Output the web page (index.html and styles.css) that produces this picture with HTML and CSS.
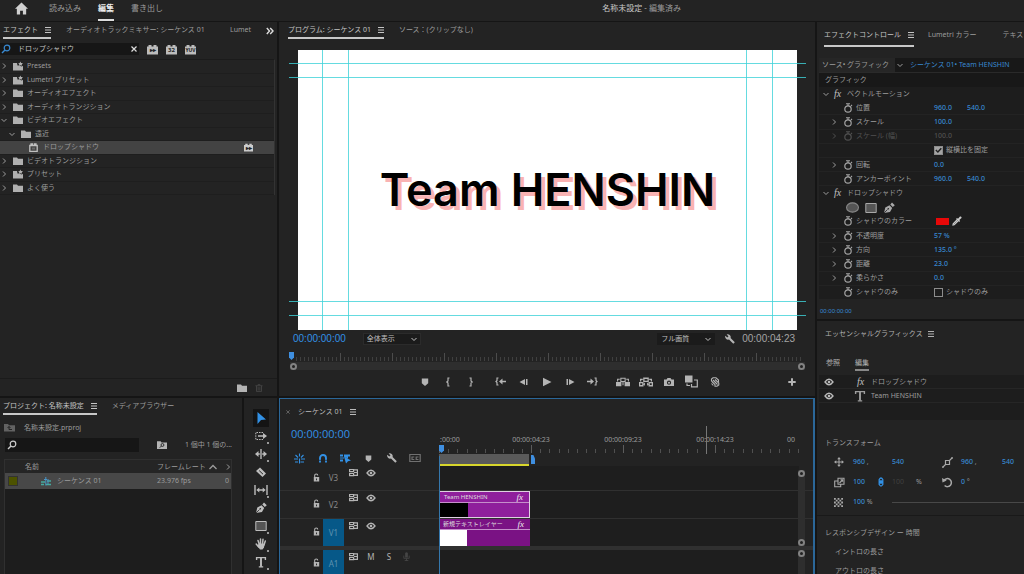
FILE: index.html
```html
<!DOCTYPE html>
<html lang="ja">
<head>
<meta charset="utf-8">
<meta name="viewport" content="width=device-width, initial-scale=1">
<title>名称未設定 - 編集済み</title>
<link rel="stylesheet" href="styles.css">
</head>
<body>
<svg class="defs" aria-hidden="true">
  <symbol id="home" viewBox="0 0 12 12"><path fill="currentColor" d="M6 .5 12 6.3h-1.700V11.500H7.300V8H4.700v3.500H1.700V6.300H0z"/></symbol>
  <symbol id="menu" viewBox="0 0 6 6"><path stroke="currentColor" d="M0 .5h6M0 3h6M0 5.500h6"/></symbol>
  <symbol id="right" viewBox="0 0 6 6"><path fill="none" stroke="currentColor" d="M2 .5 4.500 3 2 5.500"/></symbol>
  <symbol id="down" viewBox="0 0 6 6"><path fill="none" stroke="currentColor" d="M.5 2 3 4.500 5.500 2"/></symbol>
  <symbol id="up" viewBox="0 0 8 6"><path fill="none" stroke="currentColor" stroke-width="1.300" d="M.5 5 4 1.500 7.500 5"/></symbol>
  <symbol id="more" viewBox="0 0 8 8"><path fill="none" stroke="currentColor" stroke-width="1.400" d="M.8 1 3.500 4 .8 7M4.200 1 7 4 4.200 7"/></symbol>
  <symbol id="search" viewBox="0 0 10 10"><circle cx="6" cy="4" r="2.800" fill="none" stroke="currentColor" stroke-width="1.200"/><path stroke="currentColor" stroke-width="1.500" d="M4 6 1 9"/></symbol>
  <symbol id="close" viewBox="0 0 6 6"><path stroke="currentColor" stroke-width="1.200" d="m.5.5 5 5m0-5-5 5"/></symbol>
  <symbol id="folder" viewBox="0 0 10 8"><path fill="currentColor" d="M0 .5h4l1 1.200h5V8H0z"/></symbol>
  <symbol id="starfolder" viewBox="0 0 10 9"><path fill="currentColor" d="M0 1.500h4L4.500 4h3L8 5l2-.5V9H0z"/><path fill="currentColor" d="m7.300 0 .8 1.400 1.900.1-1.200 1.200.4 1.500-1.700-.8-1.600.8.3-1.600L5 1.500l1.700-.1z"/></symbol>
  <symbol id="block" viewBox="0 0 11 10"><path fill="currentColor" d="M0 2h1.500V.5h3V2h2V.5h3V2H11v8H0z"/></symbol>
  <symbol id="fxblock" viewBox="0 0 9 9"><path fill="none" stroke="currentColor" stroke-width="1.300" d="M.8 2.500h7.400v5.800H.8zM2 2.500V1h1.500v1.500m2 0V1H7v1.500"/><path fill="currentColor" d="M3 4.500h3v2H3z" opacity=".3"/></symbol>
  <symbol id="trash" viewBox="0 0 8 9"><path fill="none" stroke="currentColor" d="M0 2h8M3 2V.5h2V2M1.200 2v6.500h5.600V2M3 3.500v4m2-4v4"/></symbol>
  <symbol id="binup" viewBox="0 0 11 8"><path fill="currentColor" d="M0 .5h4l1 1.200h6V8H0z"/><path fill="none" stroke="#232323" d="M8 6H5V3M3.500 4.500 5 3l1.500 1.500"/></symbol>
  <symbol id="binfind" viewBox="0 0 11 9"><path fill="currentColor" d="M0 .5h4l1 1.200h6V9H0z"/><circle cx="6" cy="4.500" r="1.600" fill="none" stroke="#232323"/><path stroke="#232323" d="m5 5.500-2 2"/></symbol>
  <symbol id="seq" viewBox="0 0 10 10"><path stroke="#45aaa0" stroke-width="1.300" d="M0 6h4M6 5h4M0 8.500h3m2 0h5"/><path stroke="#4a96c8" d="M3 3.500h3M4.800 1v8.500M7 3v5"/></symbol>
  <symbol id="arrow" viewBox="0 0 12 12"><path fill="#3291e6" d="m2.500 0 8.500 7.500-5 .5L2.500 12z"/></symbol>
  <symbol id="trackselect" viewBox="0 0 12 12"><path fill="none" stroke="currentColor" stroke-dasharray="1.500 1" d="M8 2.500H.8v7H8"/><path fill="currentColor" d="M3 5.300h5V3l4 3-4 3V6.700H3z"/></symbol>
  <symbol id="ripple" viewBox="0 0 12 12"><path fill="currentColor" d="M5.300 1h1.400v10H5.300zM0 6l3.500-3v2.300h1.300v1.400H3.500V9zM12 6 8.500 3v2.300H7.200v1.400h1.300V9z"/></symbol>
  <symbol id="razor" viewBox="0 0 12 12"><path fill="currentColor" d="m1 5 4-3.500L11 7.500 7.500 11z"/><path stroke="#232323" d="m4.200 4.600 3.800 3.600"/></symbol>
  <symbol id="slip" viewBox="0 0 14 12"><path stroke="currentColor" stroke-width="1.400" d="M1 1v10M13 1v10M4 6h6"/><path fill="currentColor" d="m2.300 6 3-2.500v5zM11.700 6l-3-2.500v5z"/></symbol>
  <symbol id="pen" viewBox="0 0 12 12"><path fill="currentColor" d="M1 11 2.300 5.500 6.500 3.300l2.700 2.600L7 10zM7.300 2.500 9 .5l2.800 2.800-2 1.600z"/><path stroke="#232323" stroke-width=".8" d="m1 11 3.500-3.500"/><circle cx="5.300" cy="6.700" r=".8" fill="#232323"/></symbol>
  <symbol id="rect" viewBox="0 0 12 12"><path fill="#555" stroke="currentColor" d="M.8 1.500h10.400v9H.8z"/></symbol>
  <symbol id="oval" viewBox="0 0 12 12"><ellipse cx="6" cy="6" rx="5.500" ry="4.300" fill="#555" stroke="#888"/></symbol>
  <symbol id="hand" viewBox="0 0 12 12"><path fill="none" stroke="currentColor" stroke-width="1.500" stroke-linecap="round" d="M3 2.500 4.200 6M5.500 1v5M8 1.300 7.500 6M10.300 3 9 7M1.200 6l2.500 3"/><path fill="currentColor" d="m3.500 5.500 6.200.3L9 9.500 7.500 11.500H5L2.700 8.500z"/></symbol>
  <symbol id="type" viewBox="0 0 12 12"><path fill="none" stroke="currentColor" stroke-width="1.900" d="M6 1.500V10.800"/><path fill="none" stroke="currentColor" stroke-width="1.400" d="M1.600 4V1.600h8.800V4M3.800 10.900h4.400"/></symbol>
  <symbol id="marker" viewBox="0 0 8 8"><path fill="currentColor" d="M.8.5h6.400v4.700L4 8 .8 5.200z"/></symbol>
  <symbol id="brl" viewBox="0 0 6 10"><path fill="none" stroke="currentColor" stroke-width="1.200" d="M4.500 1H3v3L1.800 5 3 6v3h1.500"/></symbol>
  <symbol id="brr" viewBox="0 0 6 10"><path fill="none" stroke="currentColor" stroke-width="1.200" d="M1.500 1H3v3l1.200 1L3 6v3H1.500"/></symbol>
  <symbol id="goin" viewBox="0 0 11 10"><path fill="none" stroke="currentColor" stroke-width="1.200" d="M3.500 1.500H2V4L1 5l1 1v2.500h1.500"/><path fill="currentColor" d="m4 5 3.500-3v2.200H11v1.600H7.500V8z"/></symbol>
  <symbol id="goout" viewBox="0 0 11 10"><path fill="none" stroke="currentColor" stroke-width="1.200" d="M7.500 1.500H9V4l1 1-1 1v2.500H7.500"/><path fill="currentColor" d="M7 5 3.500 2v2.200H0v1.600h3.500V8z"/></symbol>
  <symbol id="back" viewBox="0 0 10 10"><path fill="currentColor" d="m.5 5 5.500-3v6zM7 2h1.500v6H7z"/></symbol>
  <symbol id="fwd" viewBox="0 0 10 10"><path fill="currentColor" d="M9.500 5 4 2v6zM1.500 2H3v6H1.500z"/></symbol>
  <symbol id="play" viewBox="0 0 10 10"><path fill="currentColor" d="m1 .8 8.500 4.200L1 9.200z"/></symbol>
  <symbol id="lift" viewBox="0 0 13 10"><path fill="currentColor" d="M0 5h5v4H0zM8 5h5v4H8z"/><path fill="none" stroke="currentColor" d="M4.500 1.500h4v3h-4zM1.500 4.500v-2h2M11.500 4.500v-2h-2M6.500 5v3"/></symbol>
  <symbol id="extract" viewBox="0 0 13 10"><path fill="none" stroke="currentColor" stroke-width="1.200" d="M.6 5.500h3v3h-3zM9.400 5.500h3v3h-3zM4.500 1.500h4v3h-4zM1.500 4.500v-2h2M11.500 4.500v-2h-2"/><path fill="currentColor" d="m3.500 7 2-1.500v3zM9.500 7l-2-1.500v3z"/></symbol>
  <symbol id="camera" viewBox="0 0 10 10"><path fill="currentColor" fill-rule="evenodd" d="M0 2.500h2.500l1-1.500h3l1 1.500H10V9H0zM5 3.600a2.100 2.100 0 1 0 0 4.200 2.100 2.100 0 0 0 0-4.200z"/><circle cx="5" cy="5.700" r="1" fill="currentColor"/></symbol>
  <symbol id="compare" viewBox="0 0 13 12"><path fill="currentColor" d="M0 0h7.500v7H0z"/><path fill="none" stroke="currentColor" stroke-width="1.200" d="M9 4.500h3.300v6.800H6.500V8.500M2 8v2h3"/></symbol>
  <symbol id="proxy" viewBox="0 0 10 10"><path fill="none" stroke="currentColor" stroke-width="1.100" d="M1.500 4V2L3 .8h3L8.500 3v2M3 3l4.500 4.500M1.500 4 5 7.500v1.700h2L8.800 8V6L5 2.500M1.500 6.500l1.800 2"/></symbol>
  <symbol id="plus" viewBox="0 0 8 8"><path stroke="currentColor" stroke-width="2" d="M4 .3v7.400M.3 4h7.400"/></symbol>
  <symbol id="wrench" viewBox="0 0 10 10"><path fill="currentColor" d="M1.600.4A3 3 0 0 1 5.600 4L9.800 8.200 8.300 9.800 4 5.500A3 3 0 0 1 .3 1.700L2.300 3.500 3.500 2.300z"/></symbol>
  <symbol id="nest" viewBox="0 0 11 10"><path fill="none" stroke="currentColor" stroke-width="1.100" d="M0 5.500h4M7 5.500h4M1 8.500h3m2.500 0H10M5.500 0v3M1.500 1.500l2.500 2.500M9.500 1.500 7 4M5.500 5v5"/></symbol>
  <symbol id="magnet" viewBox="0 0 10 10"><path fill="none" stroke="currentColor" stroke-width="1.900" d="M2 9.500V5a3 3 0 0 1 6 0v4.500"/><path stroke="#232323" stroke-width=".7" d="M.5 7.300h9"/></symbol>
  <symbol id="linked" viewBox="0 0 11 10"><path fill="currentColor" d="M0 1h3v2H0zM4 1h6v2H8v2L4 3zM0 6h3v2H0zM4 3l7 4-3 .8L6 10z"/><path fill="currentColor" d="M0 4h4v1H0z"/></symbol>
  <symbol id="cc" viewBox="0 0 12 10"><path fill="none" stroke="currentColor" stroke-width="1.200" d="M.8 1.500h10.400v7H.8zM5.300 4H3v2.500h2.300M9.500 4H7.200v2.500h2.300"/></symbol>
  <symbol id="lock" viewBox="0 0 8 10"><path fill="currentColor" fill-rule="evenodd" d="M1 4.500h6v5H1zM3.500 6v2h1V6z"/><path fill="none" stroke="currentColor" stroke-width="1.200" d="M2 4.500V2.800a1.700 1.700 0 0 1 3.400 0"/></symbol>
  <symbol id="sync" viewBox="0 0 9 8"><path fill="none" stroke="currentColor" stroke-width="1.200" d="M.6 1h4v2.200h-4zM.6 5h4v2.200h-4zM5 1.300h3.400v5.600H5M5 4h3.400"/></symbol>
  <symbol id="eye" viewBox="0 0 10 8"><path fill="none" stroke="currentColor" stroke-width="1.300" d="M1 4q4-5.500 8 0-4 5.500-8 0z"/><circle cx="5" cy="4" r="1.300" fill="currentColor"/></symbol>
  <symbol id="mic" viewBox="0 0 8 10"><path fill="currentColor" d="M2.500 1q1.500-1.500 3 0v5h-3z"/><path fill="none" stroke="currentColor" d="M1 4v3h6V4M4 7v3M2 9.500h4"/></symbol>
  <symbol id="watch" viewBox="0 0 10 10"><circle cx="5" cy="6" r="3.200" fill="none" stroke="currentColor" stroke-width="1.200"/><path stroke="currentColor" stroke-width="1.100" d="M3 .7h4M5 .7V3M8 2l1 1"/></symbol>
  <symbol id="dropper" viewBox="0 0 10 10"><path fill="currentColor" d="m5 2 1 .8L8 .5q2-.5 1.500 1.500L7.300 4l.8 1-1 1L4 3z"/><path fill="none" stroke="currentColor" stroke-width="1.200" d="M5 4 1.200 7.800 1 9l1.200-.2L6 5"/></symbol>
  <symbol id="move" viewBox="0 0 10 10"><path stroke="currentColor" d="M5 1v8M1 5h8"/><path fill="currentColor" d="m5 0 1.800 2.300H3.200zM5 10 3.200 7.700h3.600zM0 5l2.300-1.800v3.600zM10 5 7.700 3.200v3.600z"/></symbol>
  <symbol id="anchor" viewBox="0 0 11 11"><path fill="none" stroke="currentColor" stroke-width="1.200" d="M3.500 3.500h4v4h-4zM.5 10.500l3-3M7.500 3.500l3-3"/><path fill="currentColor" d="M.3 9v1.700H2zM9 .3h1.700V2z"/></symbol>
  <symbol id="scale" viewBox="0 0 11 10"><path fill="none" stroke="currentColor" stroke-width="1.100" d="M4 .8h6v6H4zM4 3.500H.7v5.700h6V7M5.500 5.500l3-3M6.500 2.300h2v2"/></symbol>
  <symbol id="rotate" viewBox="0 0 11 10"><path fill="none" stroke="currentColor" stroke-width="1.500" d="M2 3a4 4 0 1 1 .6 5"/><path fill="currentColor" d="M0 .5 4.700 3 .5 5z"/></symbol>
  <symbol id="checker" viewBox="0 0 9 9"><path stroke="currentColor" stroke-width="1.800" stroke-dasharray="1.800" d="M0 .9h9M0 4.500h9M0 8.100h9"/><path stroke="currentColor" stroke-width="1.800" stroke-dasharray="1.800" stroke-dashoffset="1.800" d="M0 2.700h9M0 6.300h9"/></symbol>
  <symbol id="chain" viewBox="0 0 6 10"><path fill="none" stroke="currentColor" stroke-width="1.300" d="M1.200 4.500v-2Q3-.5 4.800 2.500v2zM1.200 5.500v2q1.800 3 3.600 0v-2zM3 3v4"/></symbol>
</svg>

<header class="topbar">
  <button class="icon-btn" aria-label="ホーム"><svg class="i13"><use href="#home"/></svg></button>
  <nav class="modes">
    <button>読み込み</button><button class="on">編集</button><button>書き出し</button>
  </nav>
  <h1 class="doc"><span>名称未設定</span> - 編集済み</h1>
</header>

<main class="workspace">
  <div class="left">
    <section class="panel effects">
      <div class="tabs">
        <button class="tab on">エフェクト<svg class="i6"><use href="#menu"/></svg></button>
        <button class="tab tab-gap">オーディオトラックミキサー: シーケンス 01</button>
        <button class="tab lumet">Lumet</button>
        <button class="icon-btn bright" aria-label="その他のタブ"><svg class="i8"><use href="#more"/></svg></button>
      </div>
      <div class="fx-search">
        <label class="field blue-icon"><svg class="i10"><use href="#search"/></svg><input type="text" value="ドロップシャドウ" aria-label="エフェクトを検索"><button class="icon-btn bright" aria-label="クリア"><svg class="i6"><use href="#close"/></svg></button></label>
        <button class="badge" aria-label="高速処理"><svg class="i11"><use href="#block"/></svg><span>▸▸</span></button>
        <button class="badge" aria-label="32"><svg class="i11"><use href="#block"/></svg><span>32</span></button>
        <button class="badge" aria-label="YUV"><svg class="i11"><use href="#block"/></svg><span class="tiny">YUV</span></button>
      </div>
      <ul class="tree">
        <li><svg class="i6"><use href="#right"/></svg><svg class="i10"><use href="#starfolder"/></svg>Presets</li>
        <li><svg class="i6"><use href="#right"/></svg><svg class="i10"><use href="#starfolder"/></svg>Lumetri プリセット</li>
        <li><svg class="i6"><use href="#right"/></svg><svg class="i10"><use href="#folder"/></svg>オーディオエフェクト</li>
        <li><svg class="i6"><use href="#right"/></svg><svg class="i10"><use href="#folder"/></svg>オーディオトランジション</li>
        <li><svg class="i6"><use href="#down"/></svg><svg class="i10"><use href="#folder"/></svg>ビデオエフェクト</li>
        <li class="lv1"><svg class="i6"><use href="#down"/></svg><svg class="i10"><use href="#folder"/></svg>遠近</li>
        <li class="lv2 sel"><svg class="i9"><use href="#fxblock"/></svg>ドロップシャドウ<span class="badge small"><svg class="i9"><use href="#block"/></svg><span>▸▸</span></span></li>
        <li><svg class="i6"><use href="#right"/></svg><svg class="i10"><use href="#folder"/></svg>ビデオトランジション</li>
        <li><svg class="i6"><use href="#right"/></svg><svg class="i10"><use href="#starfolder"/></svg>プリセット</li>
        <li><svg class="i6"><use href="#right"/></svg><svg class="i10"><use href="#folder"/></svg>よく使う</li>
      </ul>
      <div class="fx-foot">
        <button class="icon-btn" aria-label="新規カスタムビン"><svg class="i10"><use href="#folder"/></svg></button>
        <button class="icon-btn dim" aria-label="削除"><svg class="i8"><use href="#trash"/></svg></button>
      </div>
    </section>

    <div class="lower">
      <section class="panel project">
        <div class="tabs">
          <button class="tab on">プロジェクト: 名称未設定<svg class="i6"><use href="#menu"/></svg></button>
          <button class="tab tab-gap">メディアブラウザー</button>
        </div>
        <div class="crumb"><svg class="i11 dim"><use href="#binup"/></svg>名称未設定.prproj</div>
        <div class="proj-search">
          <label class="field"><svg class="i10"><use href="#search"/></svg><input type="text" aria-label="プロジェクトを検索"></label>
          <button class="icon-btn" aria-label="検索ビン"><svg class="i10"><use href="#binfind"/></svg></button>
          <span>1 個中 1 個の...</span>
        </div>
        <div class="table-box">
          <table>
            <thead><tr><th class="c-label"></th><th>名前</th><th class="c-rate">フレームレート</th><th class="c-sort"><svg class="i8"><use href="#up"/></svg></th><th class="c-next"><svg class="i6"><use href="#right"/></svg></th></tr></thead>
            <tbody><tr><td><i class="swatch"></i></td><td class="seq-name"><svg class="i10"><use href="#seq"/></svg>シーケンス 01</td><td>23.976 fps</td><td></td><td>0</td></tr></tbody>
          </table>
        </div>
      </section>
      <section class="panel tools" aria-label="ツール">
        <button class="on" aria-label="選択"><svg class="i12"><use href="#arrow"/></svg></button>
        <button class="sub" aria-label="トラックの前方選択"><svg class="i12"><use href="#trackselect"/></svg></button>
        <button class="sub" aria-label="リップル"><svg class="i12"><use href="#ripple"/></svg></button>
        <button aria-label="レーザー"><svg class="i12"><use href="#razor"/></svg></button>
        <button class="sub" aria-label="スリップ"><svg class="i14"><use href="#slip"/></svg></button>
        <button aria-label="ペン"><svg class="i12"><use href="#pen"/></svg></button>
        <button class="sub" aria-label="長方形"><svg class="i12"><use href="#rect"/></svg></button>
        <button class="sub" aria-label="手のひら"><svg class="i12"><use href="#hand"/></svg></button>
        <button class="sub" aria-label="文字"><svg class="i12"><use href="#type"/></svg></button>
      </section>
    </div>
  </div>

  <div class="center">
    <section class="panel program">
      <div class="tabs">
        <button class="tab on">プログラム: シーケンス 01<svg class="i6"><use href="#menu"/></svg></button>
        <button class="tab tab-src">ソース：(クリップなし)</button>
      </div>
      <div class="monitor">
        <div class="frame">Team HENSHIN</div>
        <i class="guide h g1"></i><i class="guide h g2"></i><i class="guide h g3"></i><i class="guide h g4"></i>
        <i class="guide v g5"></i><i class="guide v g6"></i><i class="guide v g7"></i><i class="guide v g8"></i>
      </div>
      <div class="mon-ctl">
        <span class="tc blue">00:00:00:00</span>
        <span class="pick"><select aria-label="ズーム"><option>全体表示</option></select><svg class="i6"><use href="#down"/></svg></span>
        <span class="pick res"><select aria-label="解像度"><option>フル画質</option></select><svg class="i6"><use href="#down"/></svg></span>
        <button class="icon-btn" aria-label="設定"><svg class="i10"><use href="#wrench"/></svg></button>
        <span class="tc">00:00:04:23</span>
      </div>
      <div class="mon-ruler"><i class="head"></i></div>
      <div class="zoombar"><i></i><i></i></div>
      <div class="transport">
        <div><button aria-label="マーカー"><svg class="i8"><use href="#marker"/></svg></button><button aria-label="イン"><svg class="i10"><use href="#brl"/></svg></button><button aria-label="アウト"><svg class="i10"><use href="#brr"/></svg></button></div>
        <div><button aria-label="インへ移動"><svg class="i11"><use href="#goin"/></svg></button><button aria-label="1フレーム戻る"><svg class="i10"><use href="#back"/></svg></button><button aria-label="再生"><svg class="i10"><use href="#play"/></svg></button><button aria-label="1フレーム進む"><svg class="i10"><use href="#fwd"/></svg></button><button aria-label="アウトへ移動"><svg class="i11"><use href="#goout"/></svg></button></div>
        <div><button aria-label="リフト"><svg class="i14"><use href="#lift"/></svg></button><button aria-label="抽出"><svg class="i14"><use href="#extract"/></svg></button><button aria-label="フレームを書き出し"><svg class="i10"><use href="#camera"/></svg></button><button aria-label="比較表示"><svg class="i13"><use href="#compare"/></svg></button><button aria-label="プロキシ"><svg class="i10"><use href="#proxy"/></svg></button></div>
        <button class="add" aria-label="追加"><svg class="i8"><use href="#plus"/></svg></button>
      </div>
    </section>

    <section class="panel timeline">
      <div class="seq-tab"><button class="icon-btn dim2" aria-label="閉じる"><svg class="i4"><use href="#close"/></svg></button><button class="tab-name">シーケンス 01</button><svg class="i6"><use href="#menu"/></svg></div>
      <div class="tl-head">
        <div class="tl-left">
          <div class="tl-tc">00:00:00:00</div>
          <div class="tl-icons">
            <button class="blue" aria-label="ネスト"><svg class="i11"><use href="#nest"/></svg></button>
            <button class="blue" aria-label="スナップ"><svg class="i10"><use href="#magnet"/></svg></button>
            <button class="blue" aria-label="リンク"><svg class="i11"><use href="#linked"/></svg></button>
            <button aria-label="マーカー"><svg class="i7"><use href="#marker"/></svg></button>
            <button aria-label="設定"><svg class="i10"><use href="#wrench"/></svg></button>
            <button class="dim2" aria-label="キャプション"><svg class="i12"><use href="#cc"/></svg></button>
          </div>
        </div>
        <div class="tl-ruler">
          <div class="labels"><span>:00:00</span><span>00:00:04:23</span><span>00:00:09:23</span><span>00:00:14:23</span><span>00</span></div>
          <div class="ticks"></div>
          <div class="work"><i></i></div>
          <i class="hover"></i><i class="head"></i>
        </div>
      </div>
      <div class="tracks">
        <div class="track">
          <div class="th"><svg class="i9 lk"><use href="#lock"/></svg><span class="name">V3</span><svg class="i9"><use href="#sync"/></svg><svg class="i10"><use href="#eye"/></svg></div>
          <div class="lane"></div>
        </div>
        <div class="track">
          <div class="th"><svg class="i9 lk"><use href="#lock"/></svg><span class="name">V2</span><svg class="i9"><use href="#sync"/></svg><svg class="i10"><use href="#eye"/></svg></div>
          <div class="lane"><div class="clip picked"><div class="clip-name">Team HENSHIN<em>fx</em></div><div class="thumb black"></div></div></div>
        </div>
        <div class="track">
          <div class="th"><svg class="i9 lk"><use href="#lock"/></svg><span class="name target">V1</span><svg class="i9"><use href="#sync"/></svg><svg class="i10"><use href="#eye"/></svg></div>
          <div class="lane"><div class="clip"><div class="clip-name">新規テキストレイヤー<em>fx</em></div><div class="thumb"></div></div></div>
        </div>
        <div class="track audio">
          <div class="th"><svg class="i9 lk"><use href="#lock"/></svg><span class="name target">A1</span><svg class="i9"><use href="#sync"/></svg><button>M</button><button>S</button><svg class="i9 dim"><use href="#mic"/></svg></div>
          <div class="lane"></div>
        </div>
        <i class="needle"></i><div class="vbar"><i></i><i></i></div><div class="vbar low"><i></i></div>
      </div>
    </section>
  </div>

  <div class="right">
    <section class="panel controls">
      <div class="tabs">
        <button class="tab on">エフェクトコントロール<svg class="i6"><use href="#menu"/></svg></button>
        <button class="tab">Lumetri カラー</button>
        <button class="tab last">テキス</button>
      </div>
      <div class="src"><span class="master">ソース• グラフィック</span><svg class="i6"><use href="#down"/></svg><a href="#seq">シーケンス 01• Team HENSHIN</a></div>
      <div class="group">グラフィック</div>
      <div class="props">
        <div class="fxh"><svg class="i6"><use href="#down"/></svg><em>fx</em>ベクトルモーション</div>
        <div class="row"><i></i><svg class="i10"><use href="#watch"/></svg><span>位置</span><b>960.0</b><b>540.0</b></div>
        <div class="row"><svg class="i6"><use href="#right"/></svg><svg class="i10"><use href="#watch"/></svg><span>スケール</span><b>100.0</b></div>
        <div class="row off"><svg class="i6"><use href="#right"/></svg><svg class="i10"><use href="#watch"/></svg><span>スケール (幅)</span><b>100.0</b></div>
        <div class="row"><label class="chk"><input type="checkbox" checked>縦横比を固定</label></div>
        <div class="row"><svg class="i6"><use href="#right"/></svg><svg class="i10"><use href="#watch"/></svg><span>回転</span><b>0.0</b></div>
        <div class="row"><i></i><svg class="i10"><use href="#watch"/></svg><span>アンカーポイント</span><b>960.0</b><b>540.0</b></div>
        <div class="fxh"><svg class="i6"><use href="#down"/></svg><em>fx</em>ドロップシャドウ</div>
        <div class="shapes"><button aria-label="楕円形マスク"><svg class="i13"><use href="#oval"/></svg></button><button aria-label="長方形マスク"><svg class="i12"><use href="#rect"/></svg></button><button aria-label="ペンマスク"><svg class="i12"><use href="#pen"/></svg></button></div>
        <div class="row"><i></i><svg class="i10"><use href="#watch"/></svg><span>シャドウのカラー</span><button class="color" aria-label="カラー"></button><svg class="i10 drop"><use href="#dropper"/></svg></div>
        <div class="row"><svg class="i6"><use href="#right"/></svg><svg class="i10"><use href="#watch"/></svg><span>不透明度</span><b>57 %</b></div>
        <div class="row"><svg class="i6"><use href="#right"/></svg><svg class="i10"><use href="#watch"/></svg><span>方向</span><b>135.0 °</b></div>
        <div class="row"><svg class="i6"><use href="#right"/></svg><svg class="i10"><use href="#watch"/></svg><span>距離</span><b>23.0</b></div>
        <div class="row"><svg class="i6"><use href="#right"/></svg><svg class="i10"><use href="#watch"/></svg><span>柔らかさ</span><b>0.0</b></div>
        <div class="row"><i></i><svg class="i10"><use href="#watch"/></svg><span>シャドウのみ</span><label class="chk"><input type="checkbox">シャドウのみ</label></div>
      </div>
      <div class="ec-foot">00:00:00:00</div>
    </section>

    <section class="panel essential">
      <h2>エッセンシャルグラフィックス<svg class="i6"><use href="#menu"/></svg></h2>
      <div class="eg-tabs"><button>参照</button><button class="on">編集</button></div>
      <ul class="layers">
        <li><svg class="i10"><use href="#eye"/></svg><em>fx</em>ドロップシャドウ</li>
        <li><svg class="i10"><use href="#eye"/></svg><svg class="i12"><use href="#type"/></svg>Team HENSHIN</li>
      </ul>
      <h3>トランスフォーム</h3>
      <div class="xform">
        <svg class="i10"><use href="#move"/></svg><span><b>960</b> ,</span><i></i><b>540</b><i></i><svg class="i11"><use href="#anchor"/></svg><span><b>960</b> ,</span><b>540</b>
        <svg class="i11"><use href="#scale"/></svg><b>100</b><svg class="i10 blue"><use href="#chain"/></svg><span class="faint">100</span><span>%</span><svg class="i11"><use href="#rotate"/></svg><span><b>0</b> °</span><i></i>
        <svg class="i9"><use href="#checker"/></svg><span><b>100</b> %</span><hr>
      </div>
      <div class="resp">
        <h3>レスポンシブデザイン ー 時間</h3>
        <p>イントロの長さ</p>
        <p>アウトロの長さ</p>
      </div>
    </section>
  </div>
</main>
</body>
</html>
```
FILE: styles.css
```css
* { box-sizing: border-box; margin: 0; padding: 0; }
:root { --bg: #232323; --dark: #1d1d1d; --gap: #151515; --text: #9c9c9c; --bright: #c4c4c4; --blue: #3888d0; }
body {
  height: 100vh; overflow: hidden; display: grid; grid-template-rows: 21px minmax(0, 1fr); gap: 1px;
  background: var(--gap); color: var(--text);
  font: 7px/10px "Noto Sans", "Noto Sans CJK JP", sans-serif;
}
button, input, select { font: inherit; color: inherit; background: none; border: 0; outline: 0; }
ul { list-style: none; }
h1, h2, h3, th { font: inherit; text-align: left; }
b { font-weight: 500; color: var(--blue); }
svg { display: block; flex: none; }
.defs { position: absolute; width: 0; height: 0; }
.i4 { width: 4px; height: 4px; } .i6 { width: 6px; height: 6px; } .i7 { width: 7px; height: 7px; }
.i8 { width: 8px; height: 8px; } .i9 { width: 9px; height: 9px; } .i10 { width: 10px; height: 10px; }
.i11 { width: 11px; height: 11px; } .i12 { width: 12px; height: 12px; } .i13 { width: 13px; height: 13px; } .i14 { width: 14px; height: 14px; }
.icon-btn { display: grid; place-items: center; color: #b4b4b4; }
.bright { color: #ddd; }
.dim { color: #454545; }
.dim2 { color: #707070; }
.blue { color: #3291e6; }
em { font: italic 10px/10px "Liberation Serif", serif; color: #c0c0c0; }

.topbar { display: flex; align-items: stretch; background: var(--bg); font-size: 8px; padding-left: 15px; }
.topbar .icon-btn { color: #d0d0d0; padding-bottom: 4px; }
.modes { display: flex; gap: 17px; margin-left: 21px; }
.modes button { padding-bottom: 3px; border-bottom: 2px solid transparent; }
.modes .on { color: #eee; font-weight: 700; border-color: #ddd; }
.doc { margin-left: auto; padding: 3px 34% 0 0; }
.doc span { color: #c8c8c8; }

.workspace { display: grid; grid-template-columns: 277px minmax(0, 1fr) 207px; gap: 2px; min-height: 0; }
.left, .center, .right { display: grid; grid-template-columns: minmax(0, 1fr); gap: 2px; min-height: 0; min-width: 0; }
.left, .center { grid-template-rows: minmax(0, 374fr) minmax(0, 176fr); }
.right { grid-template-rows: minmax(0, 297fr) minmax(0, 253fr); }
.panel { background: var(--bg); overflow: hidden; display: flex; flex-direction: column; min-width: 0; }
.tabs { display: flex; flex: none; align-items: stretch; height: 17px; padding: 0 3px; }
.tab { display: flex; align-items: center; gap: 7px; white-space: nowrap; border-bottom: 2px solid transparent; }
.tab.on { color: var(--bright); border-color: #c8c8c8; }
.tab-gap { margin-left: 15px; }
.field { display: flex; align-items: center; background: #161616; min-width: 0; }
.field input { flex: 1; min-width: 0; color: var(--bright); }

/* effects browser */
.lumet { margin-left: auto; margin-right: 15px; }
.effects .tabs .tab { margin-right: 0; }
.effects .tabs .lumet { margin-right: 15px; }
.fx-search { display: flex; gap: 8px; height: 20px; padding: 4px 0; flex: none; }
.fx-search .field { width: 139px; padding: 0 2px 0 1px; }
.blue-icon > svg { color: var(--blue); }
.fx-search input { padding-left: 7px; }
.badge { display: grid; place-items: center; color: #bcbcbc; }
.badge > * { grid-area: 1 / 1; }
.badge span { color: #222; font-size: 6px; line-height: 6px; font-weight: 700; padding-top: 2px; }
.badge .tiny { font-size: 5px; }
.tree { display: grid; grid-template-rows: repeat(10, 1fr); height: 136px; flex: none; margin-right: 2px; border-right: 1px solid #333; border-top: 1px solid #1b1b1b; }
.tree li { display: flex; align-items: center; padding-left: 1px; border-bottom: 1px solid #1e1e1e; }
.tree li > .i6 { margin-right: 6px; }
.tree li > .i10 { margin-right: 4px; color: #b0b0b0; }
.tree .lv1 { padding-left: 9px; }
.tree .lv2 { padding-left: 29px; }
.tree .lv2 > .i9 { margin-right: 5px; color: #c0c0c0; }
.tree .sel { background: #434343; }
.badge.small { margin-left: auto; margin-right: 21px; color: #ccc; }
.fx-foot { display: flex; justify-content: flex-end; gap: 8px; margin-top: auto; padding: 4px 14px 3px 0; border-top: 1px solid #1b1b1b; }

/* project panel and tool strip */
.lower { display: grid; grid-template-columns: minmax(0, 1fr) 33px; gap: 2px; min-height: 0; }
.crumb { display: flex; align-items: center; gap: 9px; padding: 7px 4px 5px; }
.project .crumb .dim { color: #626262; }
.proj-search { display: flex; align-items: center; justify-content: space-between; padding: 0 10px 0 5px; flex: none; }
.proj-search .field { width: 134px; height: 14px; padding-left: 2px; color: #ccc; }
.table-box { flex: 1; margin: 7px 10px 0 4px; background: var(--dark); border: 1px solid #303030; border-bottom: 0; }
table { width: 100%; border-collapse: collapse; table-layout: fixed; }
thead tr { height: 13px; background: #252525; }
tbody tr { height: 16px; background: #484848; }
.c-label { width: 20px; } .c-rate { width: 52px; } .c-sort { width: 16px; } .c-next { width: 6px; }
td:last-child { overflow: hidden; }
.swatch { display: block; width: 10px; height: 10px; margin-left: 3px; background: #4c5200; border: 1px solid #333; }
.seq-name { display: flex; align-items: center; gap: 6px; height: 16px; padding-left: 16px; }
.tools { align-items: center; padding-top: 11px; }
.tools button { position: relative; width: 16px; height: 18px; flex: none; display: grid; place-items: center; color: #bdbdbd; }
.tools .on { background: #141414; }
.tools .sub::after { content: ""; position: absolute; right: 0; bottom: 1px; width: 2px; height: 2px; background: #999; }

/* program monitor */
.program .tabs { padding-left: 9px; }
.tab-src { margin-left: 15px; }
.monitor { position: relative; margin: 11px 9px 0 10px; flex: 1; min-height: 0; padding: 0 9px; }
.frame { height: 100%; display: grid; place-items: center; background: #fff; color: #000; font: 600 45px/54px Inter, sans-serif; text-shadow: 4px 4px 0 #f9b3b3; white-space: nowrap; }
.guide { position: absolute; background: #3ed2d8; opacity: .8; }
.h { left: 0; right: 0; height: 1px; } .v { top: 0; bottom: 0; width: 1px; }
.g1 { top: 13px; } .g2 { top: 27px; } .g3 { bottom: 28px; } .g4 { bottom: 14px; }
.g5 { left: 33px; } .g6 { left: 59px; } .g7 { right: 59px; } .g8 { right: 33px; }
.mon-ctl { display: flex; align-items: center; height: 18px; padding: 0 20px 0 14px; }
.tc { font: 10px/12px "Liberation Sans", sans-serif; color: #a4a4a4; }
.tc.blue { color: #3291e6; }
.pick { display: flex; align-items: center; width: 58px; height: 12px; margin-left: 17px; padding: 0 3px; background: #1b1b1b; border: 1px solid #2b2b2b; color: #c0c0c0; }
.pick select { flex: 1; min-width: 0; appearance: none; }
.pick.res { margin-left: auto; margin-right: 10px; border-color: #1b1b1b; }
.mon-ctl .icon-btn { margin-right: 7px; }
.mon-ruler { position: relative; height: 14px; margin: 0 13px 0 10px;
  background: repeating-linear-gradient(90deg, transparent 0 51px, #4c4c4c 51px 52px) 0 5px / 100% 8px no-repeat,
    repeating-linear-gradient(90deg, transparent 0 3px, #404040 3px 4px) 4px 9px / 100% 4px no-repeat; }
.head { position: absolute; left: 0; width: 5px; height: 8px; background: #3f8fe0; clip-path: polygon(0 0, 100% 0, 100% 70%, 50% 100%, 0 70%); }
.mon-ruler .head { top: 4px; }
.zoombar { display: flex; justify-content: space-between; align-items: center; height: 8px; margin: 0 10px 0 11px; background: #2e2e2e; }
.zoombar i, .vbar i { width: 7px; height: 7px; border: 2px solid #828282; border-radius: 50%; background: #222; }
.transport { display: flex; gap: 7px; align-items: center; height: 26px; padding: 0 18px 3px 25%; flex: none; color: #b4b4b4; }
.transport div { display: flex; }
.transport button { width: 23px; height: 18px; display: grid; place-items: center; }
.transport .add { width: 10px; margin-left: auto; }

/* timeline */
.timeline { border: 1px solid #2b6799; border-bottom: 0; border-right-width: 2px; }
.seq-tab { display: flex; align-items: center; height: 25px; padding-left: 6px; gap: 8px; flex: none; color: #bbb; }
.tl-head { display: grid; grid-template-columns: 159px minmax(0, 1fr); height: 42px; flex: none; }
.tl-tc { font: 11px/20px "Open Sans", sans-serif; color: #3291e6; padding-left: 11px; }
.tl-icons { display: flex; padding: 7px 0 0 8px; color: #b4b4b4; }
.tl-icons button { width: 23px; display: grid; place-items: center; height: 14px; }
.tl-ruler { position: relative; overflow: hidden; margin-right: 14px; }
.labels { display: grid; grid-template-columns: repeat(5, 92px); height: 21px; padding-top: 11px; }
.labels span { justify-self: start; width: 40px; margin-left: -20px; text-align: center; white-space: nowrap; }
.labels span:first-child { margin-left: 1px; text-align: left; }
.labels span:last-child { text-align: left; }
.ticks { height: 8px; background: repeating-linear-gradient(90deg, #5c5c5c 0 1px, transparent 1px 92px),
  repeating-linear-gradient(90deg, #505050 0 1px, transparent 1px calc(92px / 10)) 0 4px / 100% 4px no-repeat; }
.work { width: 90px; height: 12px; margin-top: 1px; background: #5a5a5a; border-bottom: 2px solid #d8d62c; }
.work i { position: absolute; left: 92px; bottom: 2px; width: 4px; height: 9px; background: #3f8fe0; clip-path: polygon(0 0, 60% 0, 100% 40%, 100% 100%, 0 100%); }
.hover { position: absolute; left: 267px; top: 2px; width: 1px; height: 28px; background: #777; }
.tl-ruler .head { top: 21px; }
.tracks { position: relative; flex: 1; }
.track { display: grid; grid-template-columns: 159px minmax(0, 1fr); height: 28px; border-bottom: 1px solid #303030; }
.track:first-child { height: 25px; }
.track.audio { height: 28px; border-top: 3px solid #303030; }
.lane { background: #1e1e1e; margin-right: 14px; }
.th { display: flex; gap: 0 8px; padding-left: 32px; color: #b4b4b4; }
.th svg { margin-top: 2px; }
.th .lk { margin-top: 8px; }
.track:first-child .lk, .track:first-child .name { margin-top: 0; padding-top: 7px; }
.track:first-child .lk { margin-top: 7px; padding-top: 0; }
.th .name { width: 21px; margin: 0 -3px 0 -6px; padding-top: 9px; font-size: 8px; text-align: center; color: #888; }
.th .target { background: #065888; color: #5f93b0; }
.th button { width: 10px; height: 14px; font-size: 8px; }
.clip { width: 91px; height: 27px; background: #7a1284; color: #ddd; }
.clip.picked { background: #8f1f9c; border: 1px solid #e0d0e2; }
.clip-name { display: flex; justify-content: space-between; height: 11px; padding: 0 6px 0 4px; font-size: 6px; border-bottom: 1px solid #c58fcb; }
.clip-name em { color: #eee; font-size: 9px; }
.thumb { width: 28px; height: 16px; background: #fff; }
.picked .thumb { height: 14px; }
.thumb.black { background: #000; }
.needle { position: absolute; left: 159px; top: -10px; bottom: 0; width: 1px; background: #3577ac; }
.vbar { position: absolute; right: 8px; top: 4px; height: 76px; width: 7px; background: #2e2e2e; display: flex; flex-direction: column; justify-content: space-between; }
.vbar.low { top: 84px; bottom: 0; height: auto; }

/* effect controls */
.controls .tabs { height: 25px; padding: 2px 0 0 7px; gap: 14px; overflow: hidden; }
.tab.last { margin-left: 12px; }
.src { display: flex; align-items: center; height: 14px; margin: 11px 0 0 2px; background: #181818; white-space: nowrap; flex: none; }
.master { width: 76px; height: 14px; padding: 2px 0 0 3px; background: #262626; margin-right: 2px; }
.src a { color: var(--blue); text-decoration: none; margin-left: 7px; }
.group { margin-left: 2px; height: 15px; padding: 2px 6px; background: #181818; flex: none; border-top: 1px solid #2a2a2a; }
.props { display: grid; grid-template-rows: repeat(15, 1fr); height: 213px; margin-left: 2px; background: var(--dark); flex: none; }
.fxh { display: flex; align-items: center; padding-left: 4px; }
.fxh em { width: 13px; margin-left: 5px; }
.row { display: grid; grid-template-columns: 12px 16px 78px 33px 1fr; align-items: center; justify-items: start; padding-left: 9px; border-bottom: 1px solid #232323; }
.row > .i6 { justify-self: center; }
.row > .i10 { justify-self: center; color: #a4a4a4; }
.row > .drop { justify-self: start; margin-left: -15px; color: #ccc; }
.row.off > *, .row.off > .i10 { color: #505050; }
.chk { grid-column: 4 / -1; display: flex; align-items: center; gap: 3px; }
.chk input { appearance: none; display: grid; place-items: center; width: 9px; height: 9px; border: 1px solid #8c8c8c; }
.chk input:checked { background: #a4a4a4; }
.chk input:checked::before { content: ""; width: 7px; height: 7px; background: #222; clip-path: polygon(5% 50%, 20% 38%, 40% 60%, 82% 12%, 98% 26%, 42% 88%); }
.shapes { display: flex; align-items: center; gap: 6px; padding-left: 27px; color: #a8a8a8; }
.shapes button { display: grid; }
.color { width: 13px; height: 7px; margin-left: 2px; background: #e80808; }
.ec-foot { padding: 4px 3px; margin: auto 0 0; font: 6px/8px "Liberation Sans", sans-serif; color: var(--blue); }

/* essential graphics */
.essential h2 { display: flex; align-items: center; gap: 5px; padding: 8px 8px 0; color: #b0b0b0; }
.eg-tabs { display: flex; gap: 15px; padding: 18px 9px 0; color: #b0b0b0; }
.eg-tabs button { height: 14px; border-bottom: 2px solid transparent; }
.eg-tabs .on { border-color: #888; }
.layers { margin: 4px 0 0 2px; height: 45px; background: var(--dark); flex: none; }
.layers li { display: grid; grid-template-columns: 30px 17px 1fr; align-items: center; height: 14px; padding-left: 5px; border-bottom: 1px solid #262626; }
.layers li > svg:first-child { color: #bbb; }
.layers em { padding-left: 3px; }
.essential h3 { padding: 18px 8px 0; }
.xform { display: grid; grid-template-columns: 19px 23px 16px 24px 26px 19px 41px 1fr; grid-template-rows: repeat(3, 20px); align-items: center; margin: 4px 0 3px 17px; flex: none; white-space: nowrap; }
.xform > svg { color: #a8a8a8; }
.xform > .blue { color: #3291e6; }
.faint { color: #404040; }
.xform hr { grid-column: 4 / -1; border: 0; border-top: 1px solid #484848; }
.resp { border-top: 1px solid #191919; }
.resp h3 { padding-top: 12px; }
.resp p { padding: 9px 0 0 18px; }
```
